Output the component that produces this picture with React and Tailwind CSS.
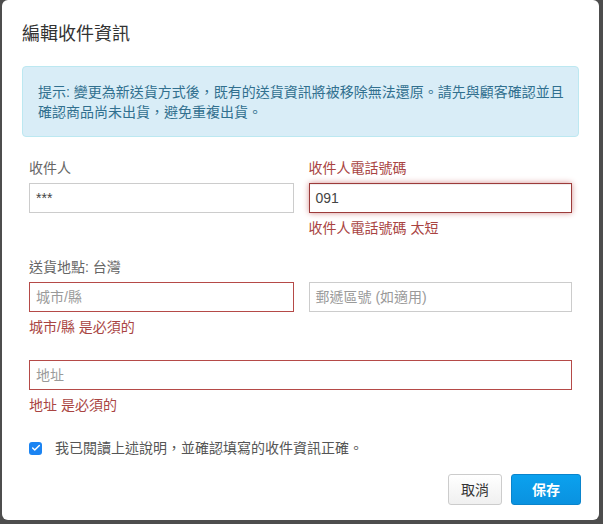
import { Check } from 'lucide-react';

const FONT = '[font-family:"Liberation_Sans","Noto_Sans_CJK_TC",sans-serif]';

function Label({ children, error }) {
  return (
    <div className={`h-5 leading-5 text-sm mb-[5px] ${error ? 'text-[#a94442]' : 'text-[#666]'}`}>
      {children}
    </div>
  );
}

function Field({ value, placeholder, error, focused }) {
  let border = 'border-[#ccc]';
  if (error) border = 'border-[#b54a48]';
  if (focused) border = 'border-[#9c3b3a] shadow-[inset_0_1px_1px_rgba(0,0,0,0.075),0_0_6px_#d59392]';
  return (
    <div className={`h-[30px] border ${border} bg-white px-[6px] flex items-center text-sm`}>
      {value ? (
        <span className="text-[#444]">{value}</span>
      ) : (
        <span className="text-[#9a9a9a]">{placeholder}</span>
      )}
    </div>
  );
}

function ErrorText({ children }) {
  return <div className="mt-[5px] h-5 leading-5 text-sm text-[#a94442]">{children}</div>;
}

export default function App() {
  return (
    <div className={`h-screen bg-[#4d4d4d] pl-[2px] overflow-hidden ${FONT}`}>
      <div className="w-[597px] h-[520px] bg-white rounded-[6px] flex flex-col">
        {/* header */}
        <div className="px-5 pt-[22px] h-[46px]">
          <h1 className="text-[18px] leading-6 text-[#333]">編輯收件資訊</h1>
        </div>

        {/* body */}
        <div className="px-5 pt-5 flex-1">
          <div className="h-[71px] bg-[#d9edf7] border border-[#bce8f1] rounded-[4px] px-[15px] py-[15px] text-sm leading-5 text-[#31708f] whitespace-nowrap">
            提示: 變更為新送貨方式後，既有的送貨資訊將被移除無法還原。請先與顧客確認並且
            <br />
            確認商品尚未出貨，避免重複出貨。
          </div>

          <div className="grid grid-cols-2 mt-[21px]">
            <div className="px-[7px]">
              <Label>收件人</Label>
              <Field value="***" />
            </div>
            <div className="px-[7px] pl-[8px]">
              <Label error>收件人電話號碼</Label>
              <Field value="091" error focused />
              <ErrorText>收件人電話號碼 太短</ErrorText>
            </div>
          </div>

          <div className="px-[7px] mt-[19px]">
            <Label>送貨地點: 台灣</Label>
          </div>
          <div className="grid grid-cols-2">
            <div className="px-[7px]">
              <Field placeholder="城市/縣" error />
              <ErrorText>城市/縣 是必須的</ErrorText>
            </div>
            <div className="px-[7px] pl-[8px]">
              <Field placeholder="郵遞區號 (如適用)" />
            </div>
          </div>

          <div className="px-[7px] mt-[23px]">
            <Field placeholder="地址" error />
            <ErrorText>地址 是必須的</ErrorText>
          </div>

          <div className="px-[7px] mt-[23px] flex items-center h-5">
            <span className="w-[13px] h-[13px] rounded-[3px] bg-[#1b84f2] flex items-center justify-center">
              <Check size={10} strokeWidth={3.5} className="text-white" />
            </span>
            <span className="ml-[13px] text-sm text-[#555]">我已閱讀上述說明，並確認填寫的收件資訊正確。</span>
          </div>
        </div>

        {/* footer */}
        <div className="px-[18px] pb-[15px] flex justify-end gap-[9px]">
          <button className="w-[54px] h-[31px] rounded-[3px] border border-[#ccc] bg-gradient-to-b from-white to-[#f0f0f0] text-sm text-[#333]">
            取消
          </button>
          <button className="w-[70px] h-[31px] rounded-[3px] border border-[#0a84cc] bg-gradient-to-b from-[#0ba1ee] to-[#0a92e0] text-sm font-bold text-white">
            保存
          </button>
        </div>
      </div>
    </div>
  );
}
